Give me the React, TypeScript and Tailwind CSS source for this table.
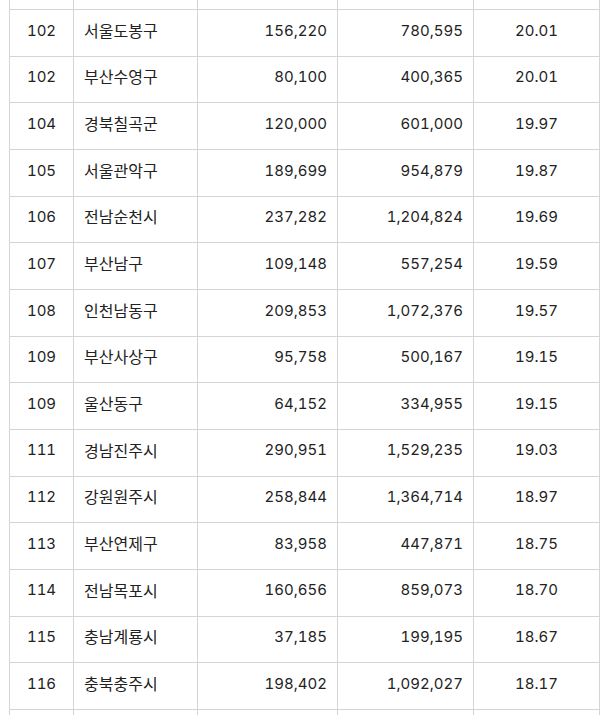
import React from "react";

const rows: [string, string, string, string, string][] = [
  ["", "", "", "", ""],
  ["102", "서울도봉구", "156,220", "780,595", "20.01"],
  ["102", "부산수영구", "80,100", "400,365", "20.01"],
  ["104", "경북칠곡군", "120,000", "601,000", "19.97"],
  ["105", "서울관악구", "189,699", "954,879", "19.87"],
  ["106", "전남순천시", "237,282", "1,204,824", "19.69"],
  ["107", "부산남구", "109,148", "557,254", "19.59"],
  ["108", "인천남동구", "209,853", "1,072,376", "19.57"],
  ["109", "부산사상구", "95,758", "500,167", "19.15"],
  ["109", "울산동구", "64,152", "334,955", "19.15"],
  ["111", "경남진주시", "290,951", "1,529,235", "19.03"],
  ["112", "강원원주시", "258,844", "1,364,714", "18.97"],
  ["113", "부산연제구", "83,958", "447,871", "18.75"],
  ["114", "전남목포시", "160,656", "859,073", "18.70"],
  ["115", "충남계룡시", "37,185", "199,195", "18.67"],
  ["116", "충북충주시", "198,402", "1,092,027", "18.17"],
  ["", "", "", "", ""],
];

export default function App() {
  return (
    <div
      className="w-[607px] h-[715px] overflow-hidden bg-white text-[15px] text-[#222] tabular-nums"
      style={{ fontFamily: 'Inter, "Noto Sans CJK KR", sans-serif' }}
    >
      <div className="ml-[9px] w-[591px] mt-[-36.67px] flex flex-col">
        {rows.map((r, i) => (
          <div key={i} className="flex h-[46.67px] border-b border-[#d4d4d4]">
            <div className="w-[64px] border-l border-[#d4d4d4] flex items-center justify-center pb-[4px]">
              {r[0]}
            </div>
            <div className="w-[124px] border-l border-[#d4d4d4] flex items-center pl-[10px] pb-[4px] text-[16px]">
              {r[1]}
            </div>
            <div className="w-[140px] border-l border-[#d4d4d4] flex items-center justify-end pr-[10px] pb-[4px]">
              {r[2]}
            </div>
            <div className="w-[136px] border-l border-[#d4d4d4] flex items-center justify-end pr-[10px] pb-[4px]">
              {r[3]}
            </div>
            <div className="w-[127px] border-l border-r border-[#d4d4d4] flex items-center justify-center pb-[4px]">
              {r[4]}
            </div>
          </div>
        ))}
      </div>
    </div>
  );
}
